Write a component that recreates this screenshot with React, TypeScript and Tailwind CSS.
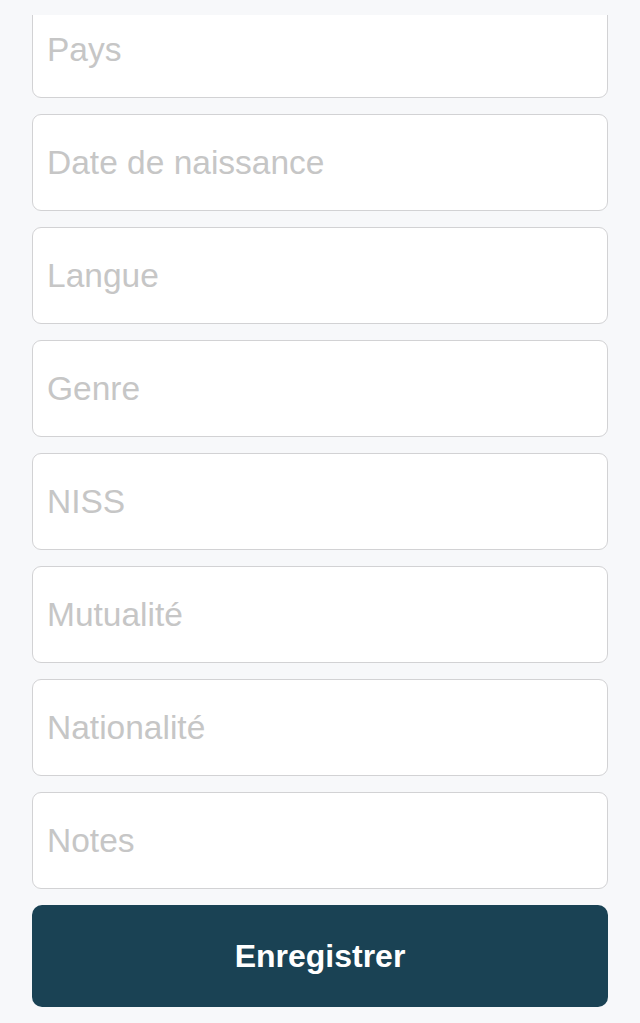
const fields = [
  'Pays',
  'Date de naissance',
  'Langue',
  'Genre',
  'NISS',
  'Mutualité',
  'Nationalité',
  'Notes',
]

function App() {
  return (
    <div className="h-[1023px] bg-[#f7f8fa] px-8 pt-[15px] pb-4 flex flex-col font-['Liberation_Sans',Arial,sans-serif]">
      <div className="flex-1 overflow-hidden">
        <form className="-mt-[14px] flex flex-col gap-4" onSubmit={(e) => e.preventDefault()}>
          {fields.map((label) => (
            <input
              key={label}
              type="text"
              placeholder={label}
              className="block w-full h-[97px] rounded-[9px] border border-[#d2d2d4] bg-white px-[14px] text-[33.5px] text-[#222] placeholder-[#c6c6c6] outline-none"
            />
          ))}
          <button
            type="submit"
            className="w-full h-[102px] rounded-[10px] bg-[#1a4254] text-white text-[32px] font-bold"
          >
            Enregistrer
          </button>
        </form>
      </div>
    </div>
  )
}

export default App
